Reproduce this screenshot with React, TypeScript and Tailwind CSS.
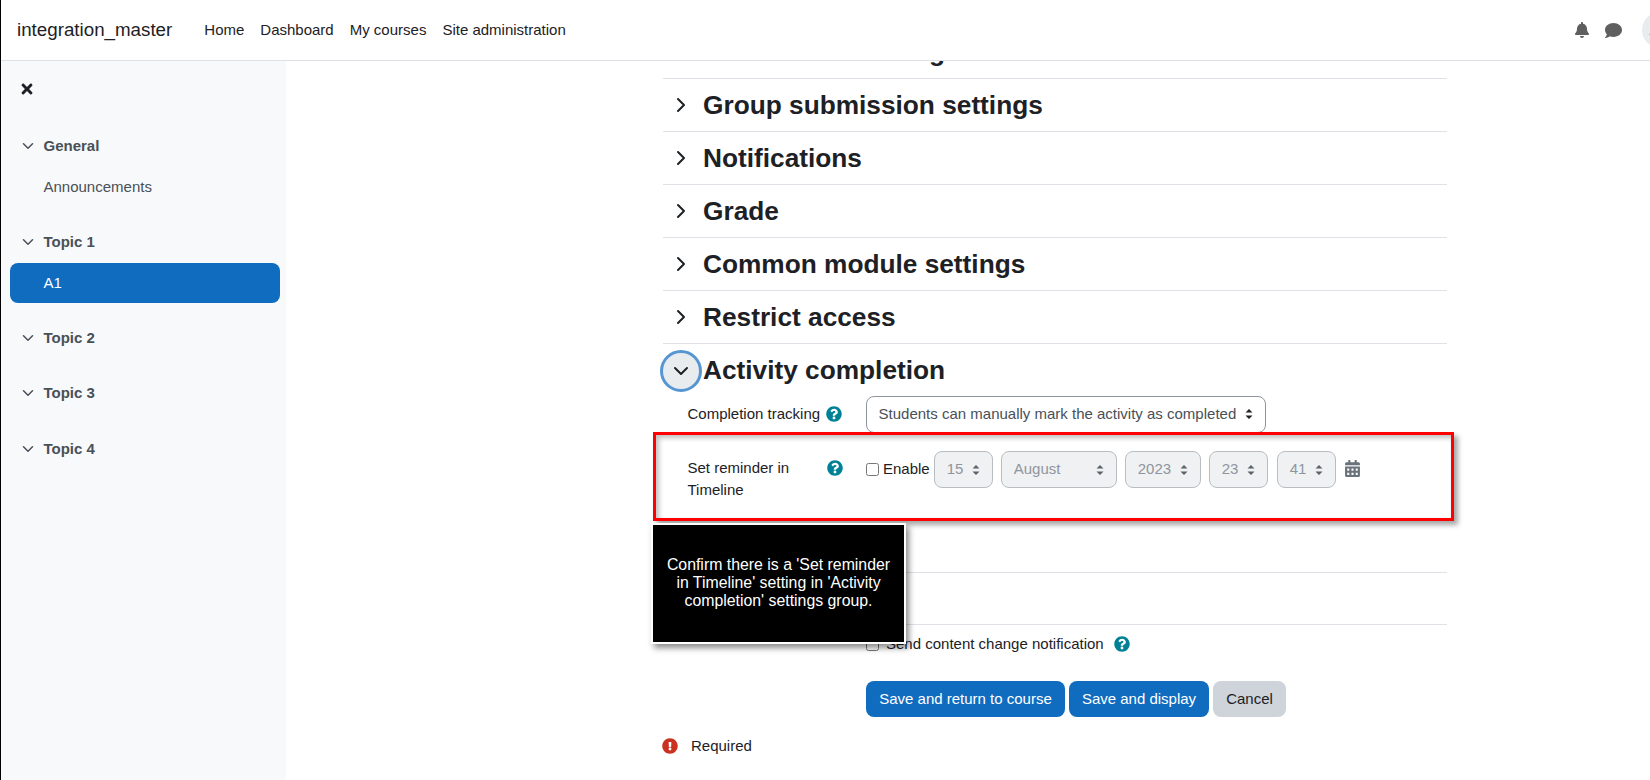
import React from 'react'
import { FaBell, FaCalendarAlt, FaComment, FaExclamationCircle, FaQuestionCircle, FaTimes } from 'react-icons/fa'
import { ChevronDown, ChevronRight } from 'lucide-react'

const sans = "font-['Liberation_Sans',Arial,sans-serif]"

const SortArrows = () => (
  <svg width="8" height="12" viewBox="0 0 8 12" className="shrink-0">
    <path d="M4 1 L7.5 4.6 H0.5 Z M4 11 L0.5 7.4 H7.5 Z" fill="currentColor" />
  </svg>
)

const Help = () => <FaQuestionCircle className="text-[#008196] shrink-0" size={16} />

const Section = ({ title }: { title: string }) => (
  <div className="h-[53px] shrink-0 border-b border-[#dee2e6] flex items-center">
    <div className="w-[40px] flex items-center pl-[6px]">
      <ChevronRight size={24} strokeWidth={2} className="text-[#1d2125]" />
    </div>
    <h3 className="text-[26.25px] font-bold text-[#1d2125] leading-none">{title}</h3>
  </div>
)

const DateSelect = ({ value, w }: { value: string; w: string }) => (
  <div className={`${w} h-[37px] rounded-lg border border-[#b8bdc2] bg-[#eff1f3] text-[#8f959e] flex items-center justify-between pl-3 pr-[12px]`}>
    <span>{value}</span>
    <span className="text-[#5b6269]"><SortArrows /></span>
  </div>
)

const TopicHead = ({ title, className }: { title: string; className: string }) => (
  <div className={`flex items-center ${className}`}>
    <ChevronDown size={18} strokeWidth={2} className="text-[#495057] ml-[18px] mr-[6.5px]" />
    <span className="font-bold text-[#495057]">{title}</span>
  </div>
)

const App = () => {
  return (
    <div className={`${sans} h-screen w-full overflow-hidden flex flex-col bg-white text-[15px] text-[#1d2125] border-l border-black`}>
      {/* Navbar */}
      <header className="h-[61px] shrink-0 border-b border-[#dee2e6] flex items-center bg-white z-10 relative">
        <span className="text-[18.75px] ml-4">integration_master</span>
        <nav className="flex gap-4 ml-[32px]">
          <a>Home</a>
          <a>Dashboard</a>
          <a>My courses</a>
          <a>Site administration</a>
        </nav>
        <div className="ml-auto flex items-center">
          <FaBell size={16} className="text-[#5f5f5f] -ml-px" />
          <FaComment size={17} className="text-[#5f5f5f] ml-[15px]" />
          <div className="w-[36px] h-[36px] rounded-full bg-[#e9ecef] ml-[20px] -mr-[28px] flex items-center justify-center text-[#495057]">AU</div>
        </div>
      </header>

      <div className="flex flex-1 min-h-0">
        {/* Course index */}
        <aside className="w-[285px] shrink-0 bg-[#f8f9fa] text-[#495057] flex flex-col">
          <FaTimes size={16} className="text-[#1d2125] ml-[18px] mt-[20px]" />
          <TopicHead title="General" className="mt-[38px]" />
          <div className="pl-[42.5px] mt-[18px]">Announcements</div>
          <TopicHead title="Topic 1" className="mt-[33px]" />
          <div className="ml-[9px] mr-[6px] mt-[9px] h-[40px] rounded-lg bg-[#0f6cbf] text-white flex items-center pl-[33.5px] pt-[1px]">A1</div>
          <TopicHead title="Topic 2" className="mt-[24px]" />
          <TopicHead title="Topic 3" className="mt-[33px]" />
          <TopicHead title="Topic 4" className="mt-[33px]" />
        </aside>

        {/* Assignment form */}
        <main className="flex-1 min-w-0 pl-[377px] relative">
          <div className="w-[784px] flex flex-col">
            <div className="-mt-[35px]">
              <Section title="Submission settings" />
            </div>
            <Section title="Group submission settings" />
            <Section title="Notifications" />
            <Section title="Grade" />
            <Section title="Common module settings" />
            <Section title="Restrict access" />

            <div className="h-[53px] shrink-0 flex items-center relative">
              <div className="w-[42px] h-[42px] -ml-[3px] mr-[1px] rounded-full bg-[#e9ecef] border-[3px] border-[#5596d3] flex items-center justify-center shrink-0">
                <ChevronDown size={24} strokeWidth={2} className="text-[#1d2125]" />
              </div>
              <h3 className="text-[26.25px] font-bold leading-none">Activity completion</h3>
            </div>

            <div className="flex items-center h-[36px] mt-[-1px]">
              <div className="w-[24.5px]" />
              <span>Completion tracking</span>
              <span className="ml-[6px]"><Help /></span>
              <div className="ml-[23.5px] w-[400px] h-[37px] rounded-lg border border-[#8f959e] flex items-center justify-between pl-3 pr-[12px] text-[#495057]">
                <span>Students can manually mark the activity as completed</span>
                <span className="text-[#1d2125]"><SortArrows /></span>
              </div>
            </div>

            <div className="flex h-[71px] mt-[17px]">
              <div className="w-[24.5px] shrink-0" />
              <div className="w-[139.5px] shrink-0 leading-[22px] pt-[8px]">Set reminder in Timeline</div>
              <span className="w-[39px] shrink-0 pt-[11px]"><Help /></span>
              <div className="flex items-start">
                <div className="flex items-center h-[37px] mt-[2px]">
                  <input type="checkbox" className="w-[13px] h-[13px] mr-[4px]" readOnly />
                  <span>Enable</span>
                </div>
                <div className="flex gap-2 ml-1 mt-[2px] items-center">
                  <DateSelect value="15" w="w-[59px]" />
                  <DateSelect value="August" w="w-[116px]" />
                  <DateSelect value="2023" w="w-[76px]" />
                  <DateSelect value="23" w="w-[59px]" />
                  <DateSelect value="41" w="w-[59px] ml-px" />
                  <FaCalendarAlt size={17} className="text-[#6a737b] -mt-[2px]" />
                </div>
              </div>
            </div>

            <div className="h-[53px] shrink-0 border-b border-[#dee2e6]" />
            <div className="h-[52px] shrink-0 border-b border-[#dee2e6]" />

            <div className="flex items-center pl-[203px] mt-[9px] h-[20px]">
              <input type="checkbox" className="w-[13px] h-[13px] mr-[7px]" readOnly />
              <span>Send content change notification</span>
              <span className="ml-[10px]"><Help /></span>
            </div>

            <div className="flex gap-1 pl-[203px] mt-[27px]">
              <button className="h-[36px] w-[199px] rounded-lg bg-[#0f6cbf] text-white">Save and return to course</button>
              <button className="h-[36px] w-[140px] rounded-lg bg-[#0f6cbf] text-white">Save and display</button>
              <button className="h-[36px] w-[73px] rounded-lg bg-[#ced4da]">Cancel</button>
            </div>

            <div className="flex items-center mt-[18px]">
              <FaExclamationCircle size={16} className="text-[#ca3120] -ml-px" />
              <span className="ml-[13px]">Required</span>
            </div>
          </div>

          {/* Tour highlight and step */}
          <div className="absolute left-[367px] top-[371px] w-[801px] h-[89px] border-[3px] border-[#ff0000] shadow-[4px_4px_5px_rgba(0,0,0,0.35),inset_3px_3px_5px_rgba(0,0,0,0.25)]" />
          <div className="absolute left-[365px] top-[462px] w-[255px] h-[121px] border-2 border-white bg-black text-white text-[15.85px] leading-[18px] text-center flex items-center justify-center px-3 pb-[2px] shadow-[3px_4px_6px_rgba(0,0,0,0.45)]">
            Confirm there is a 'Set reminder in Timeline' setting in 'Activity completion' settings group.
          </div>
        </main>
      </div>
    </div>
  )
}

export default App
